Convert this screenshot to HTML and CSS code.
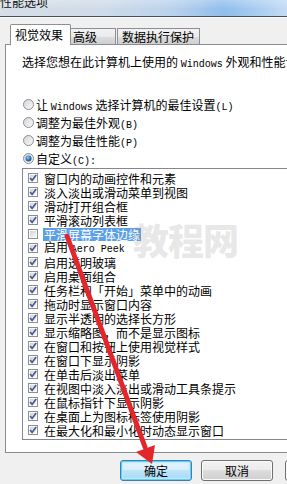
FILE: index.html
```html
<!DOCTYPE html>
<html lang="zh-CN">
<head>
<meta charset="utf-8">
<title>性能选项</title>
<link rel="stylesheet" href="styles.css">
</head>
<body>
<svg class="defs" width="0" height="0" aria-hidden="true">
  <defs>
    <linearGradient id="cbfill" x1="0" y1="0" x2="1" y2="1">
      <stop offset="0" stop-color="#cfd3d9"/>
      <stop offset="1" stop-color="#f7f7f7"/>
    </linearGradient>
    <linearGradient id="rdfill" x1="0" y1="0" x2="1" y2="1">
      <stop offset="0" stop-color="#d2d4d8"/>
      <stop offset="1" stop-color="#fbfbfb"/>
    </linearGradient>
    <radialGradient id="rddot" cx="0.4" cy="0.35" r="0.7">
      <stop offset="0" stop-color="#9fd6f7"/>
      <stop offset="0.45" stop-color="#3a87c8"/>
      <stop offset="1" stop-color="#17406e"/>
    </radialGradient>
  </defs>
  <symbol id="cb-on" viewBox="0 0 10 10">
    <rect x="0.5" y="0.5" width="9" height="9" fill="#fdfdfd" stroke="#8d8f93"/>
    <rect x="2" y="2" width="6" height="6" fill="url(#cbfill)"/>
    <path d="M2.1 5 L4.1 7.4 L8.2 1.9" fill="none" stroke="#4a5a96" stroke-width="1.7"/>
  </symbol>
  <symbol id="cb-off" viewBox="0 0 10 10">
    <rect x="0.5" y="0.5" width="9" height="9" fill="#fdfdfd" stroke="#8d8f93"/>
    <rect x="2" y="2" width="6" height="6" fill="url(#cbfill)"/>
  </symbol>
  <symbol id="rd-off" viewBox="0 0 11 11">
    <circle cx="5.5" cy="5.5" r="5" fill="url(#rdfill)" stroke="#8d8f93"/>
  </symbol>
  <symbol id="rd-on" viewBox="0 0 11 11">
    <circle cx="5.5" cy="5.5" r="5" fill="url(#rdfill)" stroke="#8d8f93"/>
    <circle cx="5.5" cy="5.5" r="3" fill="url(#rddot)"/>
  </symbol>
</svg>

<div class="titlebar"><span class="title">性能选项</span></div>

<div class="dialog">
  <div class="tabs">
    <div class="tab tab-sel">视觉效果</div>
    <div class="tab tab-adv">高级</div>
    <div class="tab tab-dep">数据执行保护</div>
  </div>

  <div class="panel">
    <p class="intro">选择您想在此计算机上使用的 <span class="en">Windows</span> 外观和性能设置。</p>

    <div class="radios">
      <div class="radio"><svg class="rd"><use href="#rd-off"/></svg><span>让 <span class="en">Windows</span> 选择计算机的最佳设置<span class="en">(L)</span></span></div>
      <div class="radio"><svg class="rd"><use href="#rd-off"/></svg><span>调整为最佳外观<span class="en">(B)</span></span></div>
      <div class="radio"><svg class="rd"><use href="#rd-off"/></svg><span>调整为最佳性能<span class="en">(P)</span></span></div>
      <div class="radio"><svg class="rd"><use href="#rd-on"/></svg><span>自定义<span class="en">(C):</span></span></div>
    </div>

    <div class="listbox">
      <div class="item"><svg class="cb"><use href="#cb-on"/></svg><span class="lbl">窗口内的动画控件和元素</span></div>
      <div class="item"><svg class="cb"><use href="#cb-on"/></svg><span class="lbl">淡入淡出或滑动菜单到视图</span></div>
      <div class="item"><svg class="cb"><use href="#cb-on"/></svg><span class="lbl">滑动打开组合框</span></div>
      <div class="item"><svg class="cb"><use href="#cb-on"/></svg><span class="lbl">平滑滚动列表框</span></div>
      <div class="item"><svg class="cb"><use href="#cb-off"/></svg><span class="lbl sel">平滑屏幕字体边缘</span></div>
      <div class="item"><svg class="cb"><use href="#cb-on"/></svg><span class="lbl">启用 <span class="en">Aero Peek</span></span></div>
      <div class="item"><svg class="cb"><use href="#cb-on"/></svg><span class="lbl">启用透明玻璃</span></div>
      <div class="item"><svg class="cb"><use href="#cb-on"/></svg><span class="lbl">启用桌面组合</span></div>
      <div class="item"><svg class="cb"><use href="#cb-on"/></svg><span class="lbl">任务栏和「开始」菜单中的动画</span></div>
      <div class="item"><svg class="cb"><use href="#cb-on"/></svg><span class="lbl">拖动时显示窗口内容</span></div>
      <div class="item"><svg class="cb"><use href="#cb-on"/></svg><span class="lbl">显示半透明的选择长方形</span></div>
      <div class="item"><svg class="cb"><use href="#cb-on"/></svg><span class="lbl">显示缩略图，而不是显示图标</span></div>
      <div class="item"><svg class="cb"><use href="#cb-on"/></svg><span class="lbl">在窗口和按钮上使用视觉样式</span></div>
      <div class="item"><svg class="cb"><use href="#cb-on"/></svg><span class="lbl">在窗口下显示阴影</span></div>
      <div class="item"><svg class="cb"><use href="#cb-on"/></svg><span class="lbl">在单击后淡出菜单</span></div>
      <div class="item"><svg class="cb"><use href="#cb-on"/></svg><span class="lbl">在视图中淡入淡出或滑动工具条提示</span></div>
      <div class="item"><svg class="cb"><use href="#cb-on"/></svg><span class="lbl">在鼠标指针下显示阴影</span></div>
      <div class="item"><svg class="cb"><use href="#cb-on"/></svg><span class="lbl">在桌面上为图标标签使用阴影</span></div>
      <div class="item"><svg class="cb"><use href="#cb-on"/></svg><span class="lbl">在最大化和最小化时动态显示窗口</span></div>
    </div>
  </div>

  <div class="buttons">
    <button class="btn btn-default">确定</button>
    <button class="btn">取消</button>
    <button class="btn btn-apply">应用(A)</button>
  </div>
</div>

<div class="watermark">教程网</div>

<svg class="arrow" width="287" height="484" viewBox="0 0 287 484" aria-hidden="true">
  <line x1="67" y1="236" x2="145" y2="447" stroke="#e2262b" stroke-width="5" stroke-linecap="round"/>
  <polygon points="152,464 136,452 155,445" fill="#e2262b"/>
</svg>
</body>
</html>
```

FILE: styles.css
```css
html, body {
  margin: 0;
  padding: 0;
  overflow: hidden;
}

body {
  width: 287px;
  height: 484px;
  position: relative;
  background: #f0f0f0;
  color: #000;
  font-family: "Noto Sans CJK SC", "Liberation Sans", sans-serif;
  font-size: 12px;
}

.defs {
  position: absolute;
  width: 0;
  height: 0;
  overflow: hidden;
}

.en {
  font-family: "Liberation Mono", "DejaVu Sans Mono", monospace;
  font-size: 10px;
}

/* title bar */
.titlebar {
  height: 16px;
  overflow: hidden;
  border-bottom: 1px solid #44505c;
  background:
    linear-gradient(180deg, rgba(255,255,255,0.25), rgba(255,255,255,0) 60%),
    linear-gradient(90deg, #d6dee8 0%, #cfdbe8 35%, #b9d2ec 60%, #8fbdec 78%, #a9cdf1 90%, #c2dcf5 100%);
}

.title {
  display: block;
  line-height: 12px;
  margin-top: -4px;
  color: #111;
}

/* dialog */
.dialog {
  width: 367px;
  box-sizing: border-box;
  padding: 6px 5px 0;
  border-top: 1px solid #fbfaf6;
}

.tabs {
  display: flex;
  align-items: flex-end;
  height: 21px;
  margin-bottom: -1px;
  padding-left: 5px;
  position: relative;
  z-index: 1;
}

.tab {
  box-sizing: border-box;
  border: 1px solid #8c8e94;
  border-bottom: none;
  height: 16px;
  margin-bottom: 1px;
  line-height: 15px;
  white-space: nowrap;
  background: linear-gradient(180deg, #f2f2f2 0%, #ebebeb 50%, #dddddd 51%, #cfcfcf 100%);
}

.tab-sel {
  width: 61px;
  height: 21px;
  margin-bottom: 0;
  padding-left: 4px;
  line-height: 20px;
  background: #fff;
  border-radius: 2px 2px 0 0;
}

.tab-adv {
  width: 45px;
  padding-left: 2px;
  border-left: none;
}

.tab-dep {
  width: 83px;
  margin-left: 1px;
  padding-left: 4px;
}

.panel {
  background: #fff;
  border: 1px solid #898c95;
  padding: 10px 16px 12px 16px;
}

.intro {
  margin: 0;
  line-height: 14px;
  white-space: nowrap;
}

.radios {
  margin-top: 23px;
}

.radio {
  display: flex;
  align-items: center;
  height: 18px;
  gap: 2px;
  white-space: nowrap;
}

.rd {
  width: 11px;
  height: 11px;
  margin-left: 1px;
  flex: none;
}

.listbox {
  margin-top: 1px;
  border: 1px solid #828790;
  padding: 2px 0 2px;
  background: #fff;
}

.item {
  display: flex;
  align-items: center;
  height: 14px;
  padding-left: 5px;
  gap: 5px;
  white-space: nowrap;
}

.cb {
  width: 10px;
  height: 10px;
  flex: none;
}

.lbl {
  line-height: 13px;
  padding: 0 1px;
}

.lbl.sel {
  background: #5b9fe6;
  color: #fff;
}

/* buttons */
.buttons {
  display: flex;
  justify-content: flex-end;
  gap: 9px;
  margin-top: 7px;
  padding-right: 5px;
}

.btn {
  box-sizing: border-box;
  width: 72px;
  height: 21px;
  padding: 0;
  border: 1px solid #707070;
  border-radius: 3px;
  font: inherit;
  line-height: 18px;
  color: #000;
  background: linear-gradient(180deg, #f2f2f2 0%, #ebebeb 48%, #dddddd 50%, #cfcfcf 100%);
  box-shadow: inset 0 0 0 1px #fbfbfb;
}

.btn-default {
  border-color: #3c7fb1;
  background: linear-gradient(180deg, #e5f4fc 0%, #d6eefb 48%, #bde4f9 50%, #a7d9f5 100%);
  box-shadow: inset 0 0 0 1px #5fd0f6, inset 0 0 1px 2px #bdeafd;
}

.btn-apply {
  margin-left: 3px;
}

/* overlays from the original screenshot */
.watermark {
  position: absolute;
  left: 133px;
  top: 217px;
  font-size: 36px;
  line-height: 44px;
  font-weight: 900;
  letter-spacing: -1px;
  color: rgba(150, 150, 150, 0.22);
  pointer-events: none;
}

.arrow {
  position: absolute;
  left: 0;
  top: 0;
  pointer-events: none;
}
```
